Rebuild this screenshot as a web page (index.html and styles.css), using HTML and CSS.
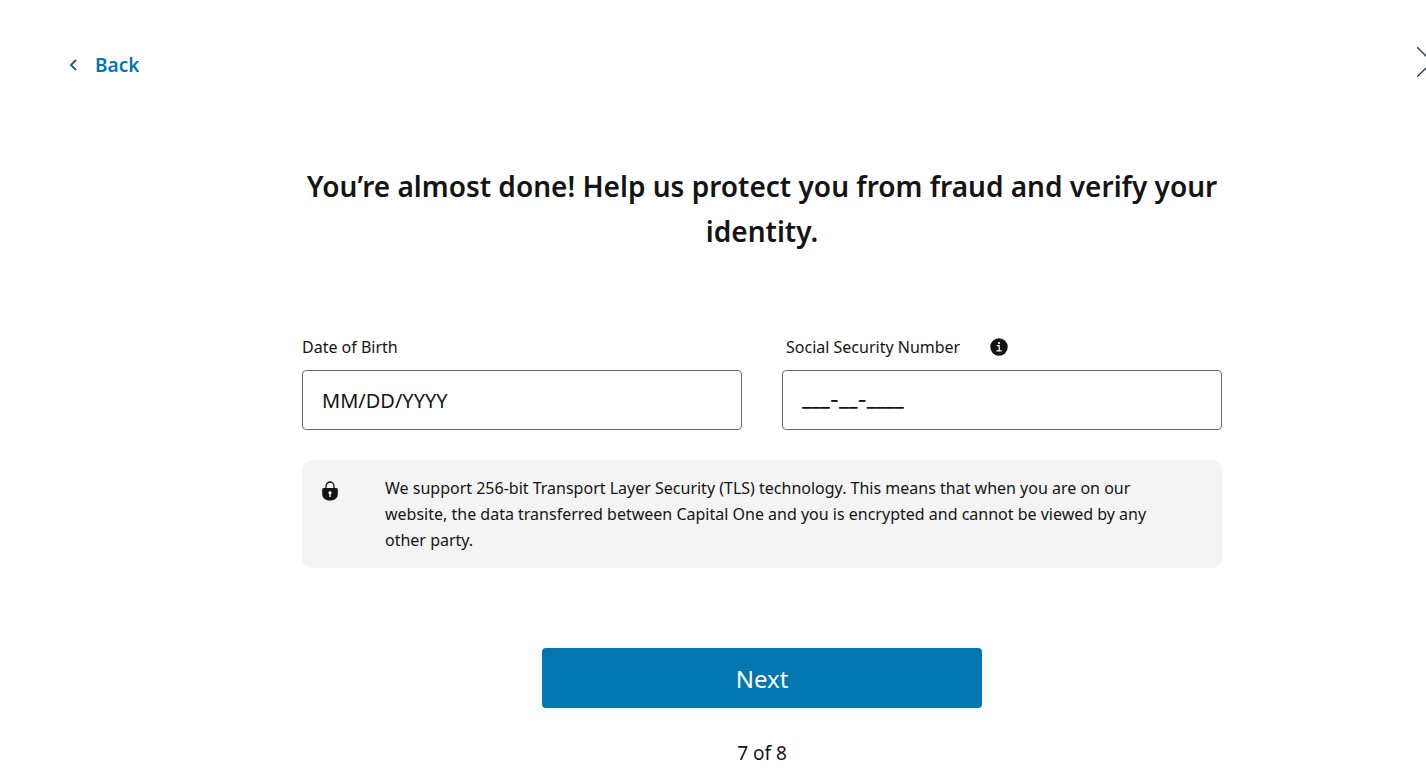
FILE: index.html
```html
<!DOCTYPE html>
<html lang="en">
<head>
    <meta charset="UTF-8">
    <meta name="viewport" content="width=device-width, initial-scale=1.0">
    <title>Verify your identity</title>
    <link rel="stylesheet" href="styles.css">
</head>
<body>
    <div class="page">
        <header class="header">
            <a class="back" href="#">
                <svg width="10" height="14" viewBox="0 0 10 14" fill="none" stroke="#255c85" stroke-width="2" aria-hidden="true">
                    <path d="M8 2 3 7l5 5"/>
                </svg>
                Back
            </a>
            <button class="close" type="button" aria-label="Close">
                <svg width="30" height="30" viewBox="0 0 30 30" fill="none" stroke="#1a3c60" stroke-width="1.3">
                    <path d="M0 0 30 30M30 0 0 30"/>
                </svg>
            </button>
        </header>

        <main class="content">
            <h1>You’re almost done! Help us protect you from fraud and verify your identity.</h1>

            <form>
                <div class="fields">
                    <div class="field">
                        <div class="label-row">
                            <label for="dob">Date of Birth</label>
                        </div>
                        <input id="dob" type="text" placeholder="MM/DD/YYYY">
                    </div>
                    <div class="field">
                        <div class="label-row indented">
                            <label for="ssn">Social Security Number</label>
                            <button class="info" type="button" aria-label="About your Social Security Number">
                                <svg width="18" height="18" viewBox="0 0 18 18">
                                    <circle cx="9" cy="9" r="8.7" fill="#141414"/>
                                    <circle cx="9" cy="5" r="1.1" fill="#fff"/>
                                    <path d="M6.8 7.7h2.4v5M6.4 12.9h5.2" fill="none" stroke="#fff" stroke-width="1.2"/>
                                </svg>
                            </button>
                        </div>
                        <input id="ssn" class="masked" type="text" placeholder="___-__-____">
                    </div>
                </div>

                <div class="notice">
                    <svg class="lock" width="16" height="20" viewBox="0 0 16 20" aria-hidden="true">
                        <path d="M4 8V5a4 4 0 0 1 8 0v3" fill="none" stroke="#141414" stroke-width="1.3"/>
                        <path d="M1.5 7h13q1.3 0 1.3 1.5v4.5c0 4-3 6.5-7.8 6.5S.2 17 .2 13V8.5Q.2 7 1.5 7z" fill="#141414"/>
                        <path d="M8 10.2a1.7 1.7 0 0 1 .7 3.2V16H7.3v-2.6A1.7 1.7 0 0 1 8 10.2z" fill="#f4f4f4"/>
                    </svg>
                    <p>We support 256-bit Transport Layer Security (TLS) technology. This means that when you are on our website, the data transferred between Capital One and you is encrypted and cannot be viewed by any other party.</p>
                </div>

                <button class="next" type="submit">Next</button>
            </form>

            <p class="step">7 of 8</p>
        </main>
    </div>
</body>
</html>
```
FILE: styles.css
```css
* {
    box-sizing: border-box;
}
body {
    margin: 0;
    overflow: hidden;
    background-color: #fff;
    color: #141414;
    font-family: "Noto Sans", sans-serif;
    font-size: 16px;
    line-height: 26px;
}
h1, p {
    margin: 0;
}
button {
    padding: 0;
    border: none;
    background: none;
    font-family: inherit;
    cursor: pointer;
}
svg {
    display: block;
}
/* wider than the window, the close icon runs off the edge */
.page {
    width: calc(100% + 98px);
}
.header {
    display: flex;
    justify-content: space-between;
    align-items: flex-start;
    padding: 47px 77px 0 68px;
}
.back {
    display: flex;
    align-items: center;
    gap: 17px;
    padding-top: 5px;
    color: #0276b1;
    font-size: 19px;
    font-weight: 600;
    text-decoration: none;
}
.content {
    max-width: 920px;
    margin: 0 auto;
    padding-top: 86px;
}
h1 {
    font-size: 28px;
    font-weight: 600;
    line-height: 45px;
    text-align: center;
}
.fields {
    display: grid;
    grid-template-columns: 1fr 1fr;
    gap: 40px;
    margin-top: 80px;
}
.label-row {
    display: flex;
    align-items: center;
    gap: 30px;
    margin-bottom: 10px;
}
.indented {
    padding-left: 4px;
}
input {
    width: 100%;
    height: 60px;
    padding: 0 19px;
    border: 1px solid #6a6a6a;
    border-radius: 4px;
    color: #141414;
    font-family: inherit;
    font-size: 20px;
}
.masked {
    font-family: Inter, sans-serif;
    font-weight: 500;
}
input::placeholder {
    color: #141414;
    opacity: 1;
}
.notice {
    display: flex;
    gap: 47px;
    margin-top: 30px;
    padding: 15px 50px 15px 20px;
    border-radius: 10px;
    background-color: #f4f4f4;
}
.lock {
    flex: none;
    margin-top: 6px;
}
.next {
    display: block;
    width: 440px;
    height: 60px;
    margin: 80px auto 0;
    border-radius: 4px;
    background-color: #0276b1;
    color: #fff;
    font-size: 24px;
}
.step {
    margin-top: 32px;
    font-size: 19px;
    text-align: center;
}
```
